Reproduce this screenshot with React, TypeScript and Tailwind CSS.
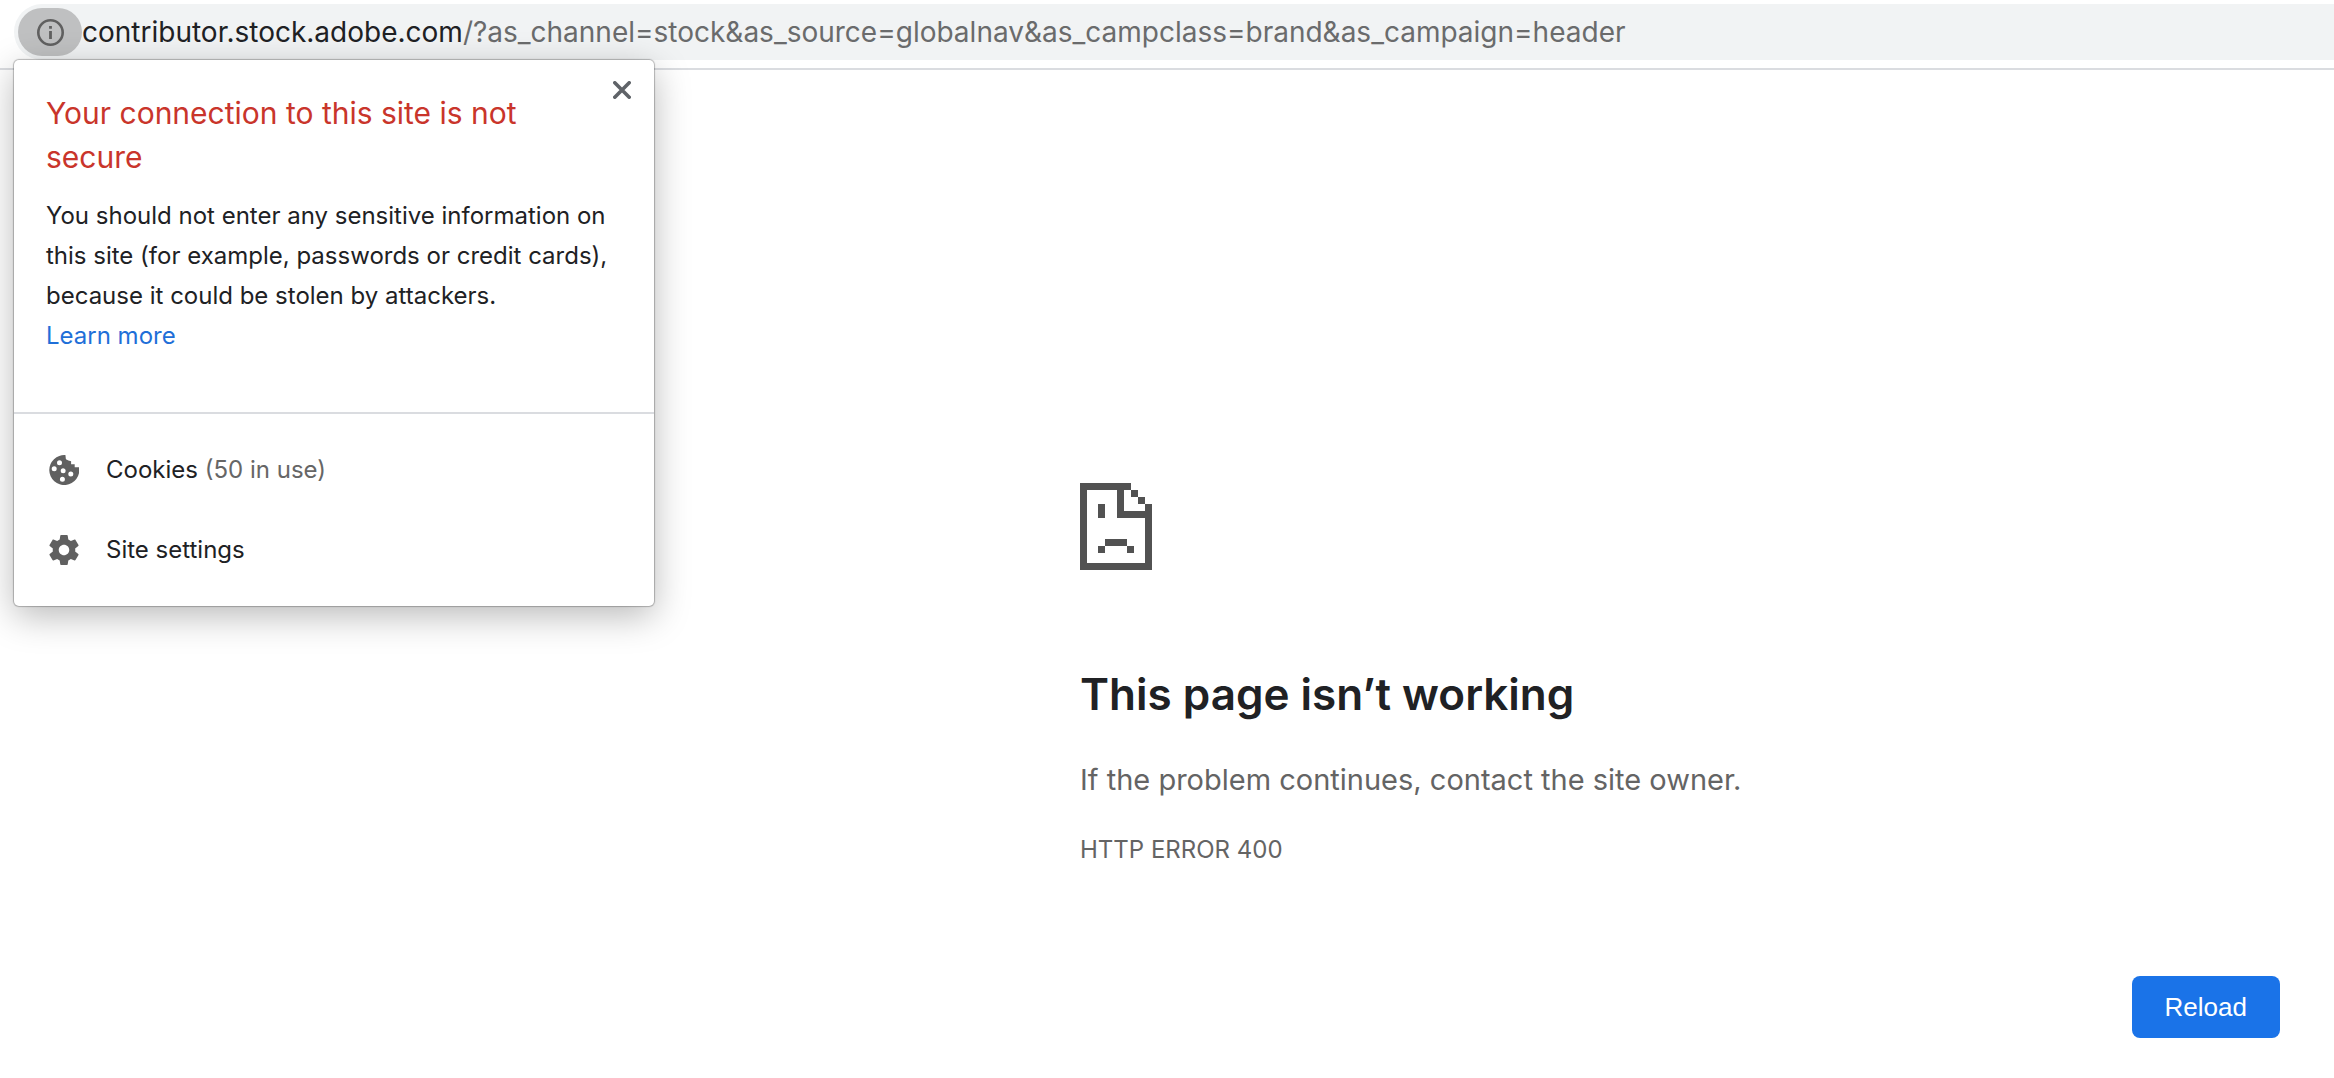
import React, { useState } from 'react';

interface PopupRow {
  id: string;
  label: string;
  detail?: string;
  icon: React.ReactNode;
}

const CookieIcon = () => (
  <svg viewBox="0 0 30 30" className="size-[30px]" fill="#606060" aria-hidden="true">
    <path
      fillRule="evenodd"
      d="M16.4 0.1A15 15 0 1 0 30 12.2h-4.3V9.2h-3.6V6.2L19.4 5.4l-2.5-1.2zM10.5 5.3a2.5 2.5 0 1 1 0 5a2.5 2.5 0 0 1 0-5zM5.2 11.3a2.5 2.5 0 1 1 0 5a2.5 2.5 0 0 1 0-5zM14.2 13.3a2.5 2.5 0 1 1 0 5a2.5 2.5 0 0 1 0-5zM21.8 16.4a2.5 2.5 0 1 1 0 5a2.5 2.5 0 0 1 0-5zM13.4 21.7a2.5 2.5 0 1 1 0 5a2.5 2.5 0 0 1 0-5z"
    />
  </svg>
);

const GearIcon = () => (
  <svg viewBox="2 2 20 20" className="size-[30px]" fill="#606060" aria-hidden="true">
    <path d="M19.43 12.98c.04-.32.07-.64.07-.98s-.03-.66-.07-.98l2.11-1.65c.19-.15.24-.42.12-.64l-2-3.46c-.12-.22-.39-.3-.61-.22l-2.49 1c-.52-.4-1.08-.73-1.69-.98l-.38-2.65C14.46 2.18 14.25 2 14 2h-4c-.25 0-.46.18-.49.42l-.38 2.65c-.61.25-1.17.59-1.69.98l-2.49-1c-.23-.09-.49 0-.61.22l-2 3.46c-.13.22-.07.49.12.64l2.11 1.65c-.04.32-.07.65-.07.98s.03.66.07.98l-2.11 1.65c-.19.15-.24.42-.12.64l2 3.46c.12.22.39.3.61.22l2.49-1c.52.4 1.08.73 1.69.98l.38 2.65c.03.24.24.42.49.42h4c.25 0 .46-.18.49-.42l.38-2.65c.61-.25 1.17-.59 1.69-.98l2.49 1c.23.09.49 0 .61-.22l2-3.46c.12-.22.07-.49-.12-.64l-2.11-1.65zM12 15.5c-1.93 0-3.5-1.57-3.5-3.5s1.57-3.5 3.5-3.5 3.5 1.57 3.5 3.5-1.57 3.5-3.5 3.5z" />
  </svg>
);

const SadPageIcon = () => (
  <svg
    viewBox="0 0 72 87"
    className="h-[87px] w-[72px]"
    fill="#525252"
    shapeRendering="crispEdges"
    aria-hidden="true"
  >
    <path d="M0 0h51v7h-7v21h21v-7h7v66H0zM7 7v73h58V35H37V7z" fillRule="evenodd" />
    <path d="M51 7h7v7h-7zM58 14h7v7h-7z" />
    <path d="M18 21h7v14h-7zM25 56h22v7H25zM18 63h7v7h-7zM47 63h7v7h-7z" />
  </svg>
);

const rows: PopupRow[] = [
  { id: 'cookies', label: 'Cookies', detail: '(50 in use)', icon: <CookieIcon /> },
  { id: 'settings', label: 'Site settings', icon: <GearIcon /> },
];

const SiteInfoPopup: React.FC<{ onClose: () => void }> = ({ onClose }) => (
  <section
    role="dialog"
    aria-labelledby="popup-title"
    className="absolute left-3.5 top-[60px] w-[640px] rounded-[5px] bg-white shadow-[0_0_1px_1px_rgba(0,0,0,0.25),0_10px_36px_rgba(0,0,0,0.28)]"
  >
    <button
      type="button"
      aria-label="Close"
      onClick={onClose}
      className="absolute right-5 top-[18px] flex size-6 items-center justify-center"
    >
      <svg viewBox="0 0 18 18" className="size-[18px]" stroke="#5f6368" strokeWidth="3.6" strokeLinecap="round">
        <path d="M1.8 1.8l14.4 14.4M16.2 1.8L1.8 16.2" />
      </svg>
    </button>
    <div className="border-b-2 border-[#dadce0] px-8 pb-14 pt-[31px]">
      <h2 id="popup-title" className="pr-14 text-[30px] leading-[44px] text-[#c9352b]">
        Your connection to this site is not secure
      </h2>
      <p className="mt-[17px] text-2xl leading-10 text-[#202124]">
        You should not enter any sensitive information on this site (for example, passwords or
        credit cards), because it could be stolen by attackers.
        <br />
        <a href="#learn-more" className="text-[#1f6fd8]">
          Learn more
        </a>
      </p>
    </div>
    <ul className="py-4">
      {rows.map((row) => (
        <li key={row.id}>
          <button
            type="button"
            className="flex h-20 w-full items-center gap-[27px] px-[35px] text-left text-2xl text-[#202124]"
          >
            {row.icon}
            <span>
              {row.label} {row.detail && <span className="text-[#666666]">{row.detail}</span>}
            </span>
          </button>
        </li>
      ))}
    </ul>
  </section>
);

export default function App() {
  const [popupOpen, setPopupOpen] = useState(true);

  return (
    <div className="relative min-h-screen overflow-hidden bg-white font-['Inter','Liberation_Sans',sans-serif]">
      <header className="border-b-2 border-[#dadce0] pb-2 pl-3.5 pt-1">
        <div className="flex h-14 items-center rounded-l-full bg-[#f1f3f4] pl-1">
          <button
            type="button"
            aria-label="View site information"
            onClick={() => setPopupOpen(!popupOpen)}
            className="flex h-12 w-16 items-center justify-center rounded-full bg-[#bfc0c1]"
          >
            <svg viewBox="0 0 27 27" className="size-[27px]" fill="#606060" aria-hidden="true">
              <circle cx="13.5" cy="13.5" r="12.2" fill="none" stroke="#606060" strokeWidth="2.6" />
              <path d="M12.1 12h2.8v8h-2.8zM12.1 7h2.8v2.8h-2.8z" />
            </svg>
          </button>
          <p className="whitespace-nowrap text-[28px] text-[#6a6b6c]">
            <span className="text-[#202124]">contributor.stock.adobe.com</span>
            /?as_channel=stock&amp;as_source=globalnav&amp;as_campclass=brand&amp;as_campaign=header
          </p>
        </div>
      </header>

      {popupOpen && <SiteInfoPopup onClose={() => setPopupOpen(false)} />}

      <main className="ml-auto mr-[54px] max-w-[1200px] pt-[413px] text-[#646464]">
        <SadPageIcon />
        <h1 className="mt-24 text-[44px] font-semibold leading-[56px] text-[#202124]">
          This page isn’t working
        </h1>
        <p className="mt-9 text-[29px] leading-[44px]">
          If the problem continues, contact the site owner.
        </p>
        <p className="mt-7 text-2xl leading-10">HTTP ERROR 400</p>
        <div className="mt-[106px] flex justify-end">
          <button
            type="button"
            className="h-[62px] rounded-lg bg-[#1a73e8] px-[33px] font-['Liberation_Sans',sans-serif] text-[26px] text-white"
          >
            Reload
          </button>
        </div>
      </main>
    </div>
  );
}
